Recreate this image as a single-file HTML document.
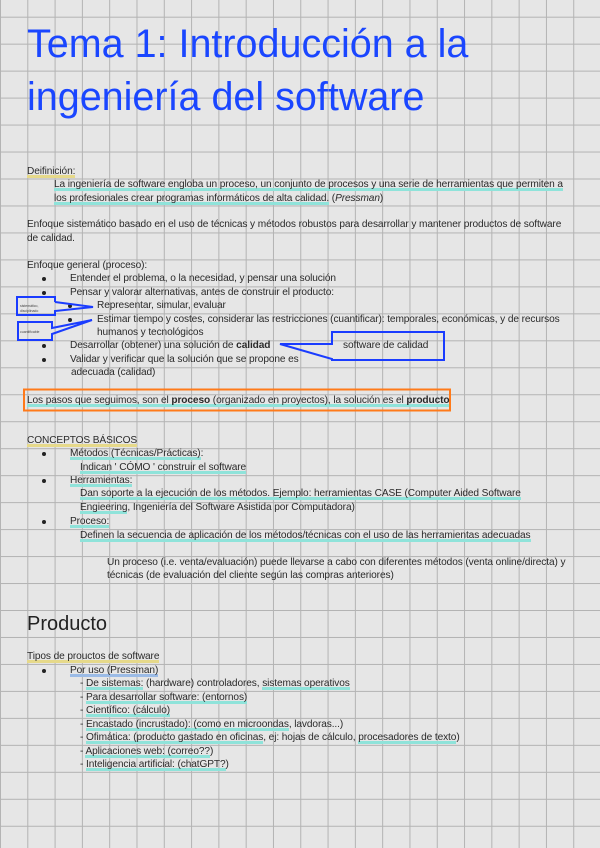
<!DOCTYPE html>
<html><head><meta charset="utf-8"><style>
html,body{margin:0;padding:0}
body{width:600px;height:848px;position:relative;overflow:hidden;background-color:#e6e6e6;
background-image:linear-gradient(to right,#b3b3b3 1px,transparent 1px),linear-gradient(to bottom,#b3b3b3 1px,transparent 1px);
background-size:27.3px 26.98px;background-position:0 16.7px;
font-family:"Liberation Sans",sans-serif;color:#2a2a2a}
.t{position:absolute;font-size:10.15px;line-height:14px;height:14px;white-space:nowrap;letter-spacing:-0.1px}
.h{background:linear-gradient(#8fe3da,#8fe3da) no-repeat;background-size:100% 3px;background-position:0 100%;padding-bottom:1px}
.y{background:linear-gradient(#e6d98a,#e6d98a) no-repeat;background-size:100% 3px;background-position:0 100%;padding-bottom:1px}
.bl{background:linear-gradient(#9bbbe6,#9bbbe6) no-repeat;background-size:100% 3px;background-position:0 100%;padding-bottom:1px}
.d{position:absolute;width:4px;height:4px;border-radius:50%;background:#222}
.title{position:absolute;left:27px;color:#1a46ff;font-size:39.5px;white-space:nowrap;line-height:44px}
</style></head><body>
<div class="title" style="top:22px">Tema 1: Introducción a la</div>
<div class="title" style="top:75px">ingeniería del software</div>

<div class="t" style="left:27px;top:165px"><span class="y">Deifinición:</span></div>
<div class="t" style="left:54px;top:178px"><span class="h">La ingeniería de software engloba un proceso, un conjunto de procesos y una serie de herramientas que permiten a</span></div>
<div class="t" style="left:54px;top:192px"><span class="h">los profesionales crear programas informáticos de alta calidad.</span> (<i>Pressman</i>)</div>
<div class="t" style="left:27px;top:218px">Enfoque sistemático basado en el uso de técnicas y métodos robustos para desarrollar y mantener productos de software</div>
<div class="t" style="left:27px;top:232px">de calidad.</div>
<div class="t" style="left:27px;top:259px">Enfoque general (proceso):</div>
<div class="d" style="left:42px;top:277px"></div><div class="t" style="left:70px;top:272px">Entender el problema, o la necesidad, y pensar una solución</div>
<div class="d" style="left:42px;top:291px"></div><div class="t" style="left:70px;top:286px">Pensar y valorar alternativas, antes de construir el producto:</div>
<div class="d" style="left:68px;top:304px"></div><div class="t" style="left:97px;top:299px">Representar, simular, evaluar</div>
<div class="d" style="left:68px;top:318px"></div><div class="t" style="left:97px;top:313px">Estimar tiempo y costes, considerar las restricciones (cuantificar): temporales, económicas, y de recursos</div>
<div class="t" style="left:97px;top:326px">humanos y tecnológicos</div>
<div class="d" style="left:42px;top:344px"></div><div class="t" style="left:70px;top:339px">Desarrollar (obtener) una solución de <b>calidad</b></div>
<div class="d" style="left:42px;top:358px"></div><div class="t" style="left:70px;top:353px">Validar y verificar que la solución que se propone es</div>
<div class="t" style="left:71px;top:366px">adecuada (calidad)</div>

<svg style="position:absolute;left:0;top:0" width="600" height="848">
<g fill="none" stroke="#1a3cff" stroke-width="2">
<path d="M55 302 V297 H17 V315 H55 V311 L93 307 L55 302"/>
<path d="M52 328 V322 H18 V340 H52 V334 L92 320 Z"/>
<path d="M332 344 V332 H444 V360 H332 V359 L280 344 Z"/>
</g>
<rect x="24" y="389.5" width="426" height="21" fill="none" stroke="#ff7a1a" stroke-width="2"/>
<text x="20" y="307" font-size="3.5" fill="#444" font-family="Liberation Sans">sistemático,</text>
<text x="20" y="312" font-size="3.5" fill="#444" font-family="Liberation Sans">disciplinado</text>
<text x="20" y="333" font-size="3.5" fill="#444" font-family="Liberation Sans">cuantificable</text>
</svg>
<div class="t" style="left:343px;top:339px">software de calidad</div>
<div class="t" style="left:27px;top:394px"><span class="h">Los pasos que seguimos, son el <b>proceso</b> (organizado en proyectos), la solución es el <b>producto</b></span></div>

<div class="t" style="left:27px;top:434px"><span class="y">CONCEPTOS BÁSICOS</span></div>
<div class="d" style="left:42px;top:452px"></div><div class="t" style="left:70px;top:447px"><span class="h">Métodos (Técnicas/Prácticas)</span>:</div>
<div class="t" style="left:80px;top:461px"><span class="h">Indican ' CÓMO ' construir el software</span></div>
<div class="d" style="left:42px;top:479px"></div><div class="t" style="left:70px;top:474px"><span class="h">Herramientas:</span></div>
<div class="t" style="left:80px;top:487px"><span class="h">Dan soporte a la ejecución de los métodos. Ejemplo: herramientas CASE (Computer Aided Software</span></div>
<div class="t" style="left:80px;top:501px"><span class="h">Engieering</span>, Ingeniería del Software Asistida por Computadora)</div>
<div class="d" style="left:42px;top:520px"></div><div class="t" style="left:70px;top:515px"><span class="h">Proceso:</span></div>
<div class="t" style="left:80px;top:529px"><span class="h">Definen la secuencia de aplicación de los métodos/técnicas con el uso de las herramientas adecuadas</span></div>
<div class="t" style="left:107px;top:556px">Un proceso (i.e. venta/evaluación) puede llevarse a cabo con diferentes métodos (venta online/directa) y</div>
<div class="t" style="left:107px;top:569px">técnicas (de evaluación del cliente según las compras anteriores)</div>

<div style="position:absolute;left:27px;top:612px;font-size:20px;line-height:24px;color:#222">Producto</div>
<div class="t" style="left:27px;top:650px"><span class="y">Tipos de prouctos de software</span></div>
<div class="d" style="left:42px;top:669px"></div><div class="t" style="left:70px;top:664px"><span class="bl">Por uso (Pressman)</span></div>
<div class="t" style="left:80px;top:677px">- <span class="h">De sistemas:</span> (hardware) controladores, <span class="h">sistemas operativos</span></div>
<div class="t" style="left:80px;top:691px">- <span class="h">Para desarrollar software: (entornos)</span></div>
<div class="t" style="left:80px;top:704px">- <span class="h">Científico: (cálculo)</span></div>
<div class="t" style="left:80px;top:718px">- <span class="h">Encastado (incrustado): (como en microondas</span>, lavdoras...)</div>
<div class="t" style="left:80px;top:731px">- <span class="h">Ofimática: (producto gastado en oficinas</span>, ej: hojas de cálculo, <span class="h">procesadores de texto</span>)</div>
<div class="t" style="left:80px;top:745px">- <span class="h">Aplicaciones web: (correo??</span>)</div>
<div class="t" style="left:80px;top:758px">- <span class="h">Inteligencia artificial: (chatGPT?</span>)</div>
</body></html>
